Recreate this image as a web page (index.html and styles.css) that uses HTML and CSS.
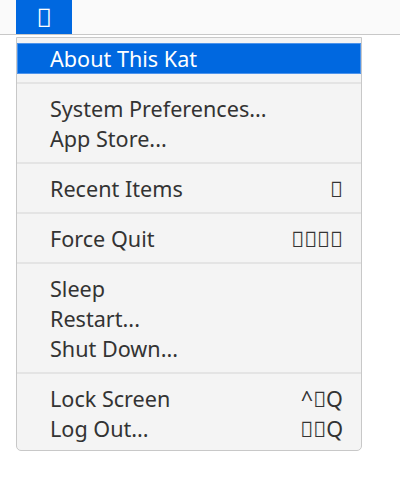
FILE: index.html
```html
<!DOCTYPE html>
<html lang="en">
<head>
    <meta charset="UTF-8">
    <meta name="viewport" content="width=device-width, initial-scale=1.0">
    <title>Menu</title>
    <link rel="stylesheet" href="styles.css">
</head>
<body>
    <div class="menubar">
        <div class="apple-button">&#xF8FF;</div>
    </div>
    <div class="menu">
        <div class="item active">About This Kat</div>
        <div class="separator"></div>
        <div class="item">System Preferences...</div>
        <div class="item">App Store...</div>
        <div class="separator"></div>
        <div class="item">Recent Items <span class="shortcut">&#xE000;</span></div>
        <div class="separator"></div>
        <div class="item">Force Quit <span class="shortcut">&#xE001;&#xE002;&#xE003;&#xE004;</span></div>
        <div class="separator"></div>
        <div class="item">Sleep</div>
        <div class="item">Restart...</div>
        <div class="item">Shut Down...</div>
        <div class="separator"></div>
        <div class="item">Lock Screen <span class="shortcut">^&#xE005;Q</span></div>
        <div class="item">Log Out... <span class="shortcut">&#xE006;&#xE007;Q</span></div>
    </div>
</body>
</html>
```

FILE: styles.css
```css
body {
    margin: 0;
    font-family: "Noto Sans", sans-serif;
    background-color: white;
    color: #333;
}
.menubar {
    height: 34px;
    background-color: #fafafa;
    border-bottom: 1px solid #c8c8c8;
    padding-left: 16px;
    display: flex;
}
.apple-button {
    width: 56px;
    background-color: #0068e0;
    color: white;
    font-size: 26px;
    display: flex;
    align-items: center;
    justify-content: center;
}
.menu {
    margin: 2px 0 0 16px;
    width: 344px;
    background-color: #f4f4f4;
    border: 1px solid #c8c8c8;
    border-radius: 0 0 5px 5px;
    padding: 5px 0 6px;
}
.item {
    display: flex;
    justify-content: space-between;
    font-size: 21.6px;
    line-height: 30px;
    padding: 0 18px 0 33px;
}
.item.active {
    background-color: #0068e0;
    color: white;
    box-shadow: inset 0 0 0 1px #4d94ec;
    line-height: 31px;
}
.separator {
    height: 2px;
    background-color: #e4e4e4;
    margin: 8px 0 10px;
}
```
